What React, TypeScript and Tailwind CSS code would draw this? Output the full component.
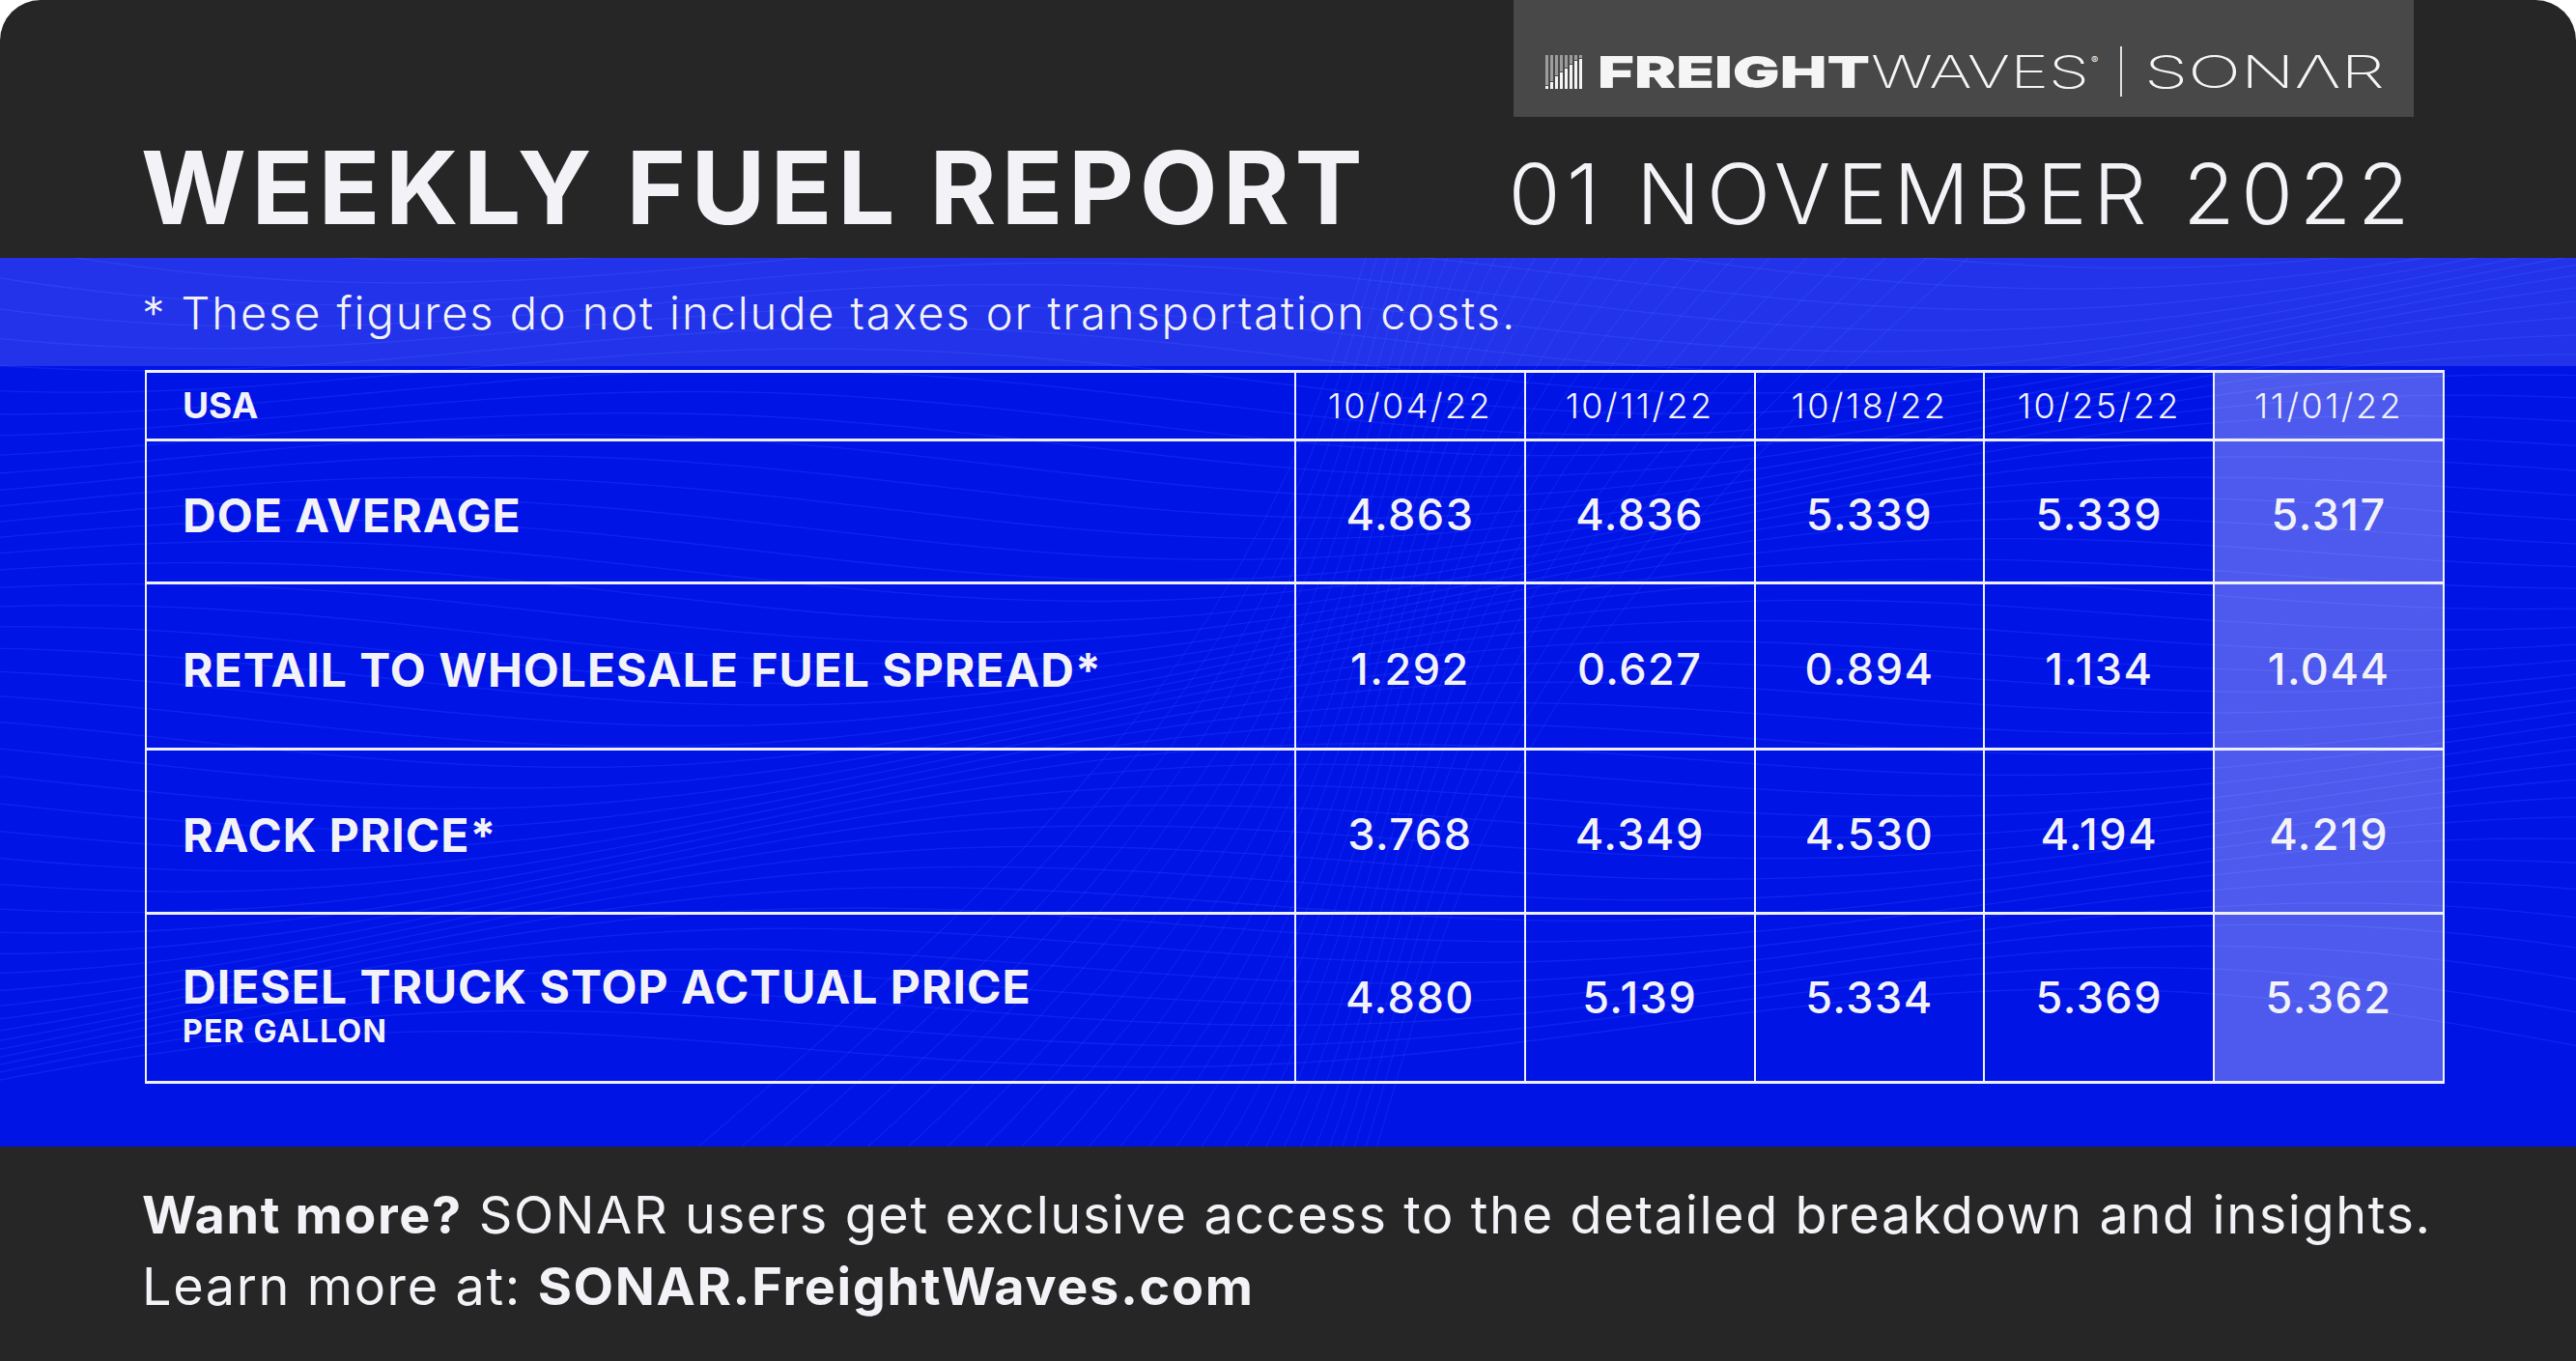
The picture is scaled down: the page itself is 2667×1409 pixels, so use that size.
import React from "react";

const dates = ["10/04/22", "10/11/22", "10/18/22", "10/25/22", "11/01/22"];

const rows = [
  { label: "DOE AVERAGE", values: ["4.863", "4.836", "5.339", "5.339", "5.317"] },
  { label: "RETAIL TO WHOLESALE FUEL SPREAD*", values: ["1.292", "0.627", "0.894", "1.134", "1.044"] },
  { label: "RACK PRICE*", values: ["3.768", "4.349", "4.530", "4.194", "4.219"] },
  { label: "DIESEL TRUCK STOP ACTUAL PRICE", sub: "PER GALLON", values: ["4.880", "5.139", "5.334", "5.369", "5.362"] },
];

// background wave lines of the blue panel
function waves() {
  const lines: string[] = [];
  for (let i = 0; i < 46; i++) {
    const y0 = i * 22 - 120;
    let d = "";
    for (let x = -60; x <= 2740; x += 40) {
      const y = y0 + 40 * Math.sin(x / 300 + i * 0.22) + 80 * Math.sin(x / 1100 + i * 0.07);
      d += (x === -60 ? "M" : "L") + x + " " + y.toFixed(1) + " ";
    }
    lines.push(d);
  }
  return lines;
}

function fans() {
  const lines: string[] = [];
  for (let i = 0; i < 26; i++) {
    const x0 = 700 + i * 28;
    let d = "";
    for (let t = 0; t <= 1.0001; t += 0.05) {
      const y = 940 - t * 960;
      const x = x0 + t * 700 + 140 * Math.sin(t * 3 + i * 0.12);
      d += (t === 0 ? "M" : "L") + x.toFixed(1) + " " + y.toFixed(1) + " ";
    }
    lines.push(d);
  }
  return lines;
}

function Logo() {
  const bars = [88, 84, 78, 74, 70, 66, 62, 60];
  return (
    <svg width="932" height="121" viewBox="0 0 932 121">
      <rect width="932" height="121" fill="#484848" />
      {bars.map((split, i) => (
        <g key={i}>
          <rect x={33 + i * 5} y={57} width={3} height={split - 57} fill="#9c9c9c" />
          <rect x={33 + i * 5} y={split + 1} width={3} height={92 - split - 1} fill="#f4f4f4" />
        </g>
      ))}
      <text x="87" y="91" fontFamily="Inter, sans-serif" fontWeight="900" fontSize="46" fill="#f5f5f5" textLength="282" lengthAdjust="spacingAndGlyphs">
        FREIGHT
      </text>
      <text x="370" y="91" fontFamily="Inter, sans-serif" fontWeight="200" fontSize="46" fill="#f5f5f5" textLength="226" lengthAdjust="spacingAndGlyphs">
        WAVES
      </text>
      <text x="598" y="66" fontFamily="Inter, sans-serif" fontSize="11" fill="#f5f5f5">
        ®
      </text>
      <line x1="629" y1="48" x2="629" y2="100" stroke="#e0e0e0" strokeWidth="2" />
      <text x="653" y="91" fontFamily="Inter, sans-serif" fontWeight="200" fontSize="46" fill="#f5f5f5" textLength="249" lengthAdjust="spacingAndGlyphs">
        SONΛR
      </text>
    </svg>
  );
}

export default function App() {
  return (
    <div className="h-[1409px] w-[2667px] bg-white font-[Inter,sans-serif] text-[#f2f2f7]">
      <div className="flex h-full w-full flex-col overflow-hidden rounded-t-[42px] bg-[#262626]">
        {/* header */}
        <div className="flex h-[267px] shrink-0 flex-col">
          <div className="flex justify-end pr-[168px]">
            <Logo />
          </div>
          <div className="mt-[20px] flex items-baseline justify-between pl-[146px] pr-[166px]">
            <h1 className="text-[105px] font-bold leading-none tracking-[5.5px]">WEEKLY FUEL REPORT</h1>
            <div className="text-[87px] font-light leading-none tracking-[6.7px]">01 NOVEMBER 2022</div>
          </div>
        </div>

        {/* blue panel */}
        <div className="relative h-[920px] shrink-0 bg-[#0114e6]">
          <svg className="absolute inset-0" width="2667" height="920" viewBox="0 0 2667 920">
            {waves().map((d, i) => (
              <path key={i} d={d} fill="none" stroke="#2f4dff" strokeOpacity="0.3" strokeWidth="1.3" />
            ))}
            {fans().map((d, i) => (
              <path key={"f" + i} d={d} fill="none" stroke="#2f4dff" strokeOpacity="0.25" strokeWidth="1.2" />
            ))}
          </svg>

          <div className="relative flex h-full flex-col">
            <div className="flex h-[112px] items-center bg-white/[0.13] pl-[147px]">
              <p className="text-[47px] font-light leading-none tracking-[1.9px]">* These figures do not include taxes or transportation costs.</p>
            </div>

            <div className="pl-[150px] pt-[4px]">
              <div className="grid w-[2381px] grid-cols-[1190px_repeat(5,1fr)] grid-rows-[71px_148px_172px_170px_175px] border-b-[3px] border-r-2 border-[#eef0ff]">
                <div className="flex items-center border-l-2 border-t-[3px] border-[#eef0ff] pl-[37px] text-[37px] font-bold">USA</div>
                {dates.map((d, i) => (
                  <div
                    key={d}
                    className={`flex items-center justify-center border-l-2 border-t-[3px] border-[#eef0ff] text-[36px] font-light tracking-[2.5px] ${i === 4 ? "bg-white/30" : ""}`}
                  >
                    {d}
                  </div>
                ))}

                {rows.map((r) => (
                  <React.Fragment key={r.label}>
                    <div className={`flex flex-col justify-center border-l-2 border-t-[3px] border-[#eef0ff] pl-[37px] ${r.sub ? "" : "pt-[8px]"}`}>
                      <div className={`text-[48px] font-bold leading-none tracking-[1px] ${r.sub ? "mt-[16px]" : ""}`}>{r.label}</div>
                      {r.sub && <div className="mt-[6px] text-[32px] font-bold leading-none tracking-[1.2px]">{r.sub}</div>}
                    </div>
                    {r.values.map((v, i) => (
                      <div
                        key={i}
                        className={`flex items-center justify-center border-l-2 border-t-[3px] border-[#eef0ff] text-[45px] font-medium tracking-[1.5px] ${r.sub ? "" : "pt-[6px]"} ${i === 4 ? "bg-white/30" : ""}`}
                      >
                        {v}
                      </div>
                    ))}
                  </React.Fragment>
                ))}
              </div>
            </div>
          </div>
        </div>

        {/* footer */}
        <div className="flex-1 pl-[147px] pt-[34px] text-[54px] leading-[74px] tracking-[1.6px]">
          <p>
            <span className="font-bold">Want more?</span> SONAR users get exclusive access to the detailed breakdown and insights.
          </p>
          <p>
            Learn more at: <span className="font-bold">SONAR.FreightWaves.com</span>
          </p>
        </div>
      </div>
    </div>
  );
}
